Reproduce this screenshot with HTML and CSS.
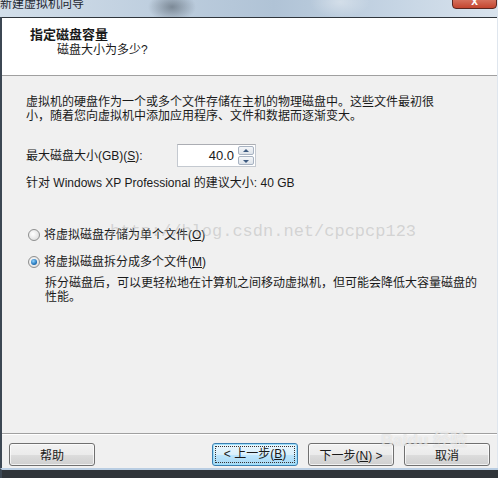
FILE: index.html
```html
<!DOCTYPE html>
<html lang="zh-CN">
<head>
    <meta charset="UTF-8">
    <title>新建虚拟机向导</title>
    <link rel="stylesheet" href="styles.css">
</head>
<body>
    <div class="window">
        <div class="titlebar">
            <span class="title">新建虚拟机向导</span>
            <span class="close-btn">x</span>
        </div>

        <div class="frame">
            <header class="wizard-header">
                <h1>指定磁盘容量</h1>
                <p>磁盘大小为多少?</p>
            </header>

            <main class="content">
                <p class="intro">虚拟机的硬盘作为一个或多个文件存储在主机的物理磁盘中。这些文件最初很<br>小，随着您向虚拟机中添加应用程序、文件和数据而逐渐变大。</p>

                <div class="size-row">
                    <label for="diskSize">最大磁盘大小(GB)(<u>S</u>):</label>
                    <div class="spin-box">
                        <span class="spin-value" id="diskSize">40.0</span>
                        <div class="spin-buttons">
                            <span class="spin-up"></span>
                            <span class="spin-down"></span>
                        </div>
                    </div>
                </div>

                <p class="recommend">针对 Windows XP Professional 的建议大小: 40 GB</p>

                <div class="radio-row first">
                    <span class="radio"></span>
                    <span>将虚拟磁盘存储为单个文件(<u>O</u>)</span>
                </div>
                <div class="radio-row">
                    <span class="radio checked"></span>
                    <span>将虚拟磁盘拆分成多个文件(<u>M</u>)</span>
                </div>
                <p class="radio-note">拆分磁盘后，可以更轻松地在计算机之间移动虚拟机，但可能会降低大容量磁盘的<br>性能。</p>

                <div class="watermark">http://blog.csdn.net/cpcpcp123</div>
            </main>

            <footer class="buttons">
                <button class="btn help">帮助</button>
                <div class="nav-buttons">
                    <button class="btn primary"><span class="focus">&lt; 上一步(<u>B</u>)</span></button>
                    <button class="btn">下一步(<u>N</u>) &gt;</button>
                    <button class="btn">取消</button>
                </div>
                <div class="baidu-mark">Baidu 经验</div>
            </footer>
        </div>

        <div class="bottom-strip"></div>
    </div>
</body>
</html>
```

FILE: styles.css
```css
:root {
    --face: #f0f0f0;
    --text: #1a1a1a;
    --line: #a0a0a0;
    --frame-dark: #3c4753;
}

* {
    margin: 0;
    padding: 0;
    box-sizing: border-box;
}

body {
    width: 498px;
    height: 478px;
    overflow: hidden;
    font-family: "Liberation Sans", "Noto Sans CJK SC", sans-serif;
    font-size: 12px;
    color: var(--text);
    background: var(--face);
}

.window {
    display: flex;
    flex-direction: column;
    height: 478px;
}

/* Title bar */
.titlebar {
    position: relative;
    height: 17px;
    flex-shrink: 0;
    overflow: hidden;
    background:
        radial-gradient(ellipse 24px 15px at 172px 7px, rgba(60, 70, 80, 0.5), transparent),
        radial-gradient(ellipse 30px 16px at 340px 2px, rgba(255, 255, 255, 0.35), transparent),
        linear-gradient(90deg, #d3dfea 0%, #bfcfdf 30%, #b0c3d6 55%, #c6d5e4 80%, #d9e3ed 100%);
}

.title {
    display: block;
    margin-top: -3px;
    line-height: 14px;
    font-size: 12px;
    color: #1e2630;
}

.close-btn {
    position: absolute;
    top: -6px;
    right: 1px;
    width: 45px;
    height: 15px;
    border: 1px solid #5a2620;
    border-radius: 0 0 4px 4px;
    background: linear-gradient(#e08a78, #c3452f);
    color: #fff;
    font-weight: bold;
    font-size: 12px;
    line-height: 12px;
    text-align: center;
}

/* Frame */
.frame {
    flex: 1;
    display: flex;
    flex-direction: column;
    border-left: 2px solid var(--frame-dark);
    border-right: 1px solid #dfe6ee;
}

.wizard-header {
    height: 59px;
    flex-shrink: 0;
    background: #fff;
    border-top: 1px solid #2f353b;
    border-bottom: 1px solid var(--line);
    padding: 9px 0 0 28px;
}

.wizard-header h1 {
    font-size: 13px;
    font-weight: bold;
    line-height: 15px;
}

.wizard-header p {
    margin-top: 1px;
    padding-left: 27px;
    line-height: 14px;
}

/* Content */
.content {
    flex: 1;
    position: relative;
    padding: 19px 0 0 24px;
    line-height: 14px;
}

.size-row {
    display: flex;
    align-items: center;
    height: 23px;
    margin-top: 21px;
}

.size-row label {
    width: 151px;
}

.spin-box {
    display: flex;
    width: 79px;
    height: 23px;
    background: #fff;
    border: 1px solid #c4c9d0;
    border-top-color: #abadb3;
}

.spin-value {
    flex: 1;
    text-align: right;
    padding-right: 4px;
    font-size: 13px;
    line-height: 21px;
}

.spin-buttons {
    display: flex;
    flex-direction: column;
    gap: 1px;
    width: 17px;
    padding: 1px 1px 1px 0;
}

.spin-up,
.spin-down {
    flex: 1;
    position: relative;
    border: 1px solid #a8b3c2;
    border-radius: 2px;
    background: linear-gradient(#f4f6f9, #dde3ea);
}

.spin-up::after,
.spin-down::after {
    content: "";
    position: absolute;
    left: 4px;
    border-left: 3px solid transparent;
    border-right: 3px solid transparent;
}

.spin-up::after {
    top: 2px;
    border-bottom: 3px solid #3d5a80;
}

.spin-down::after {
    top: 3px;
    border-top: 3px solid #3d5a80;
}

.recommend {
    margin-top: 9px;
}

.radio-row {
    display: flex;
    align-items: center;
    gap: 4px;
    margin-top: 13px;
    margin-left: 2px;
}

.radio-row.first {
    margin-top: 38px;
}

.radio {
    width: 12px;
    height: 12px;
    border-radius: 50%;
    border: 1px solid #8e8f8f;
    background: radial-gradient(circle at 40% 40%, #ffffff, #e2e2e2 70%, #cfcfcf);
    position: relative;
}

.radio.checked::after {
    content: "";
    position: absolute;
    inset: 2px;
    border-radius: 50%;
    background: radial-gradient(circle at 40% 35%, #8fd3ff, #1c6fb5 65%, #0d4a86);
}

.radio-note {
    margin-top: 7px;
    padding-left: 19px;
}

.watermark {
    position: absolute;
    left: 108px;
    top: 149px;
    font-family: "Liberation Mono", monospace;
    font-size: 17px;
    color: rgba(175, 175, 175, 0.45);
    pointer-events: none;
}

/* Buttons */
.buttons {
    position: relative;
    height: 35px;
    flex-shrink: 0;
    display: flex;
    justify-content: space-between;
    padding: 9px 7px 0 7px;
    border-top: 1px solid var(--line);
    box-shadow: inset 0 1px 0 #fff;
}

.nav-buttons {
    display: flex;
    gap: 10px;
}

.btn {
    width: 86px;
    height: 23px;
    font-family: inherit;
    font-size: 12px;
    color: var(--text);
    border: 1px solid #707070;
    border-radius: 3px;
    background: linear-gradient(#f2f2f2 0%, #ebebeb 50%, #dddddd 51%, #cfcfcf 100%);
    box-shadow: inset 0 0 0 1px rgba(255, 255, 255, 0.7);
}

.btn.primary {
    padding: 2px;
    border-color: #3c7fb1;
    background: linear-gradient(#eaf6fd 0%, #d9f0fc 50%, #bee6fd 51%, #a7d9f5 100%);
    box-shadow: inset 0 0 0 1px #9fe0fb;
}

.btn.primary .focus {
    display: block;
    height: 17px;
    line-height: 15px;
    border: 1px dotted #333;
}

.baidu-mark {
    position: absolute;
    right: 30px;
    top: -8px;
    font-size: 17px;
    font-weight: bold;
    color: rgba(255, 255, 255, 0.55);
    text-shadow: 0 0 1px rgba(150, 150, 150, 0.35);
    pointer-events: none;
}

.bottom-strip {
    height: 10px;
    flex-shrink: 0;
    border-top: 2px solid #b9cde2;
    border-left: 2px solid var(--frame-dark);
    background: #2f3439;
}
```
